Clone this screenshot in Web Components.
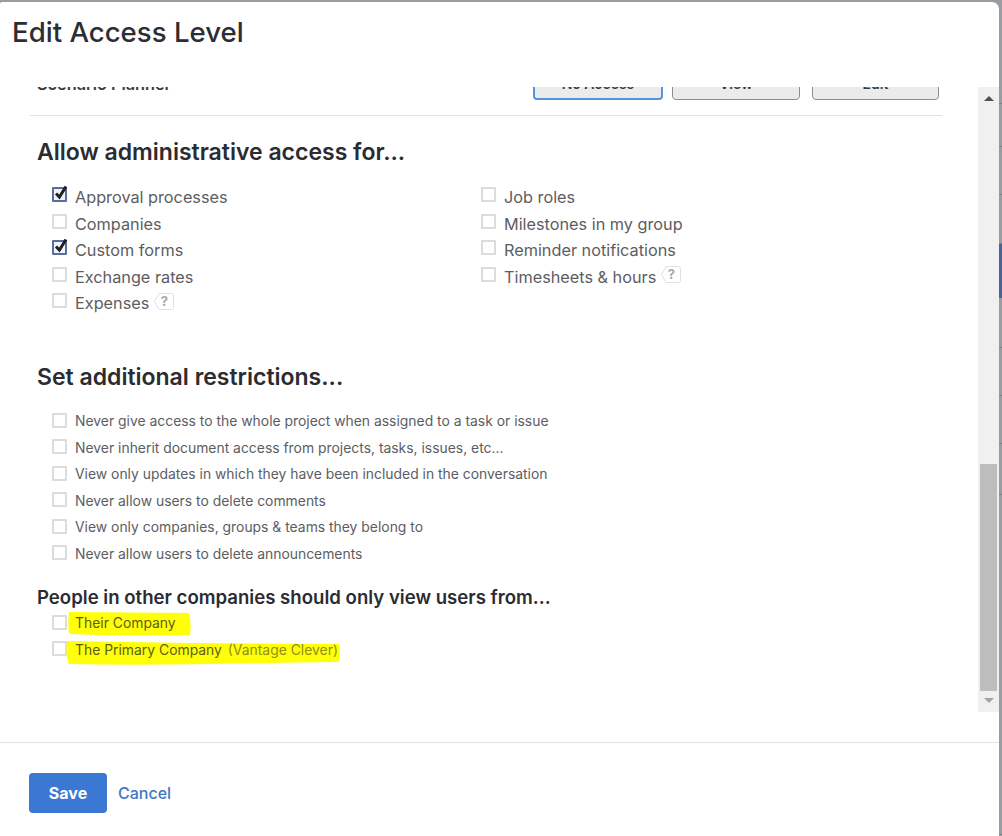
<!DOCTYPE html>
<html lang="en">
<head>
<meta charset="utf-8">
<title>Edit Access Level</title>
<style>
    html, body { margin: 0; height: 100%; }
    body { font-family: Inter, Lato, sans-serif; overflow: hidden; background: #9a9ca3; }
</style>
</head>
<body>
<access-page>
    <access-dialog heading="Edit Access Level">
        <level-row label="Scenario Planner"></level-row>

        <section-title>Allow administrative access for...</section-title>
        <check-columns>
            <div>
                <access-check checked>Approval processes</access-check>
                <access-check>Companies</access-check>
                <access-check checked>Custom forms</access-check>
                <access-check>Exchange rates</access-check>
                <access-check help>Expenses</access-check>
            </div>
            <div>
                <access-check>Job roles</access-check>
                <access-check>Milestones in my group</access-check>
                <access-check>Reminder notifications</access-check>
                <access-check help>Timesheets &amp; hours</access-check>
            </div>
        </check-columns>

        <section-title gap="45" below="16.5">Set additional restrictions...</section-title>
        <access-check small>Never give access to the whole project when assigned to a task or issue</access-check>
        <access-check small>Never inherit document access from projects, tasks, issues, etc...</access-check>
        <access-check small>View only updates in which they have been included in the conversation</access-check>
        <access-check small>Never allow users to delete comments</access-check>
        <access-check small>View only companies, groups &amp; teams they belong to</access-check>
        <access-check small>Never allow users to delete announcements</access-check>

        <section-title minor gap="17.5">People in other companies should only view users from...</section-title>
        <access-check small><marker-ink shape="short">Their Company</marker-ink></access-check>
        <access-check small><marker-ink shape="long">The Primary Company <small style="font-size:inherit;color:#8f8f12;margin-left:2px">(Vantage Clever)</small></marker-ink></access-check>
    </access-dialog>
</access-page>

<script>
class AccessPage extends HTMLElement {
    constructor() {
        super();
        this.attachShadow({ mode: 'open' });
    }

    connectedCallback() {
        // the sliver of the app behind the modal, on the right edge
        const bands = [102, 43, 48, 49, 54, 50, 48, 48, 51, 340];
        const strip = bands.map((h, i) => `<i class="${i === 4 ? 'active' : ''}" style="height:${h}px"></i>`).join('');
        this.shadowRoot.innerHTML = /*html*/`
        <style>
            :host{ display:flex; width:1002px; height:836px; padding-top:2px; box-sizing:border-box; background:#9a9ca3; }
            .main{ flex:1; min-width:0; }
            .strip{ width:3px; display:flex; flex-direction:column; }
            .strip i{ display:block; box-sizing:border-box; border-bottom:1px solid #7f8187; }
            .strip i.active{ background:#46639a; border-bottom:none; }
        </style>
        <div class="main"><slot></slot></div>
        <div class="strip">${strip}</div>`;
    }
}
customElements.define('access-page', AccessPage);

class AccessDialog extends HTMLElement {
    constructor() {
        super();
        this.attachShadow({ mode: 'open' });
    }

    static get styles() {
        return /*css*/`
        :host{
            display:flex;
            flex-direction:column;
            height:834px;
            background:#fff;
            border-radius:2px 7px 0 0;
            overflow:hidden;
            color:#55565b;
        }
        .head{
            height:85px;
            box-sizing:border-box;
            padding:13px 0 0 12px;
            flex:none;
        }
        h1{
            margin:0;
            font-size:27.6px;
            line-height:34px;
            font-weight:500;
            color:#2c2d35;
        }
        .body{
            height:625px;
            flex:none;
            display:flex;
        }
        .pane{
            flex:1;
            min-width:0;
            overflow:hidden;
            padding:0 36px 0 30px;
        }
        .foot{
            margin-top:30px;
            border-top:1px solid #e2e2e2;
            padding:30px 0 0 29px;
            display:flex;
            align-items:center;
            gap:11px;
        }
        .save{
            width:78px;
            height:40px;
            border:none;
            border-radius:4px;
            background:#3a78d4;
            color:#fff;
            font:700 16px Inter, sans-serif;
        }
        .cancel{
            color:#3f77c6;
            font-size:16px;
            font-weight:500;
            text-decoration:none;
        }
        `;
    }

    connectedCallback() {
        this.render();
    }

    render() {
        this.shadowRoot.innerHTML = /*html*/`
        <style>${AccessDialog.styles}</style>
        <header class="head"><h1>${this.getAttribute('heading')}</h1></header>
        <div class="body">
            <div class="pane"><slot></slot></div>
            <fake-scrollbar></fake-scrollbar>
        </div>
        <footer class="foot">
            <button class="save">Save</button>
            <a class="cancel" href="#">Cancel</a>
        </footer>`;
    }
}
customElements.define('access-dialog', AccessDialog);

class FakeScrollbar extends HTMLElement {
    constructor() {
        super();
        this.attachShadow({ mode: 'open' });
        this.shadowRoot.innerHTML = /*html*/`
        <style>
            :host{
                display:flex;
                flex-direction:column;
                align-items:center;
                flex:none;
                width:21px;
                box-sizing:border-box;
                padding:9px 0;
                background:#f0f0f0;
            }
            .up,.down{
                width:0;
                height:0;
                border-left:5px solid transparent;
                border-right:5px solid transparent;
            }
            .up{ border-bottom:5px solid #505050; }
            .down{ border-top:5px solid #a3a3a3; margin-top:7px; }
            .thumb{
                width:17px;
                height:227px;
                margin-top:auto;
                background:#bdbdbd;
            }
        </style>
        <div class="up"></div>
        <div class="thumb"></div>
        <div class="down"></div>`;
    }
}
customElements.define('fake-scrollbar', FakeScrollbar);

// the row scrolled mostly out of view, only its bottom edge shows
class LevelRow extends HTMLElement {
    constructor() {
        super();
        this.attachShadow({ mode: 'open' });
    }

    connectedCallback() {
        this.shadowRoot.innerHTML = /*html*/`
        <style>
            :host{
                display:flow-root;
                height:29px;
                box-sizing:border-box;
                border-bottom:1px solid #e2e2e2;
            }
            .row{
                height:30px;
                margin-top:-17px;
                display:flex;
                align-items:center;
            }
            .label{
                margin-left:7px;
                margin-top:-2px;
                width:496px;
                font-size:16.3px;
                font-weight:600;
                color:#3a3a3e;
                white-space:nowrap;
            }
            button{
                height:30px;
                box-sizing:border-box;
                border:1px solid #8c8c8c;
                border-radius:4px;
                background:#ebebeb;
                color:#3a3a3e;
                font:600 14px Inter, sans-serif;
                padding:0 0 3px;
                margin-left:9px;
                width:128px;
            }
            button.on{ width:130px; margin-left:0; border:2px solid #5495e0; }
            button:last-child{ margin-left:12px; width:127px; }
        </style>
        <div class="row">
            <span class="label">${this.getAttribute('label')}</span>
            <button class="on">No Access</button>
            <button>View</button>
            <button>Edit</button>
        </div>`;
    }
}
customElements.define('level-row', LevelRow);

class SectionTitle extends HTMLElement {
    constructor() {
        super();
        this.attachShadow({ mode: 'open' });
    }

    connectedCallback() {
        const minor = this.hasAttribute('minor');
        const top = this.getAttribute('gap') || 21;
        const below = this.getAttribute('below') || (minor ? 1.5 : 17);
        this.shadowRoot.innerHTML = /*html*/`
        <style>
            :host{
                display:block;
                margin:${top}px 0 ${below}px 7px;
                font-size:${minor ? 18.6 : 23}px;
                line-height:${minor ? 24 : 30}px;
                font-weight:600;
                color:#2b2c31;
                white-space:nowrap;
            }
        </style>
        <slot></slot>`;
    }
}
customElements.define('section-title', SectionTitle);

class CheckColumns extends HTMLElement {
    constructor() {
        super();
        this.attachShadow({ mode: 'open' });
        this.shadowRoot.innerHTML = /*html*/`
        <style>
            :host{ display:grid; grid-template-columns:429px 1fr; }
        </style>
        <slot></slot>`;
    }
}
customElements.define('check-columns', CheckColumns);

class AccessCheck extends HTMLElement {
    constructor() {
        super();
        this.attachShadow({ mode: 'open' });
    }

    static get styles() {
        return /*css*/`
        :host{
            display:flex;
            align-items:center;
            height:26.5px;
            padding-left:22px;
            font-size:16.25px;
            color:#5c5d62;
            white-space:nowrap;
        }
        :host([small]){
            font-size:13.9px;
        }
        .box{
            position:relative;
            flex:none;
            width:15px;
            height:15px;
            box-sizing:border-box;
            margin:-5px 8px 0 0;
            border:2px solid #dcdcdc;
            border-radius:1px;
            background:#fff;
        }
        :host([small]) .box{
            margin-top:-2px;
        }
        :host([checked]) .box{
            border-color:#5a6d9e;
            background:#f2f3f7;
        }
        svg{
            position:absolute;
            left:0;
            top:-5px;
        }
        `;
    }

    connectedCallback() {
        const tick = this.hasAttribute('checked')
            ? '<svg width="14" height="16" viewBox="0 0 14 16"><path d="M2 9.5 5.4 13 12 2.5" fill="none" stroke="#1f2126" stroke-width="3"/></svg>'
            : '';
        const help = this.hasAttribute('help') ? '<help-tag></help-tag>' : '';
        this.shadowRoot.innerHTML = /*html*/`
        <style>${AccessCheck.styles}</style>
        <span class="box">${tick}</span>
        <span><slot></slot></span>${help}`;
    }
}
customElements.define('access-check', AccessCheck);

class HelpTag extends HTMLElement {
    constructor() {
        super();
        this.attachShadow({ mode: 'open' });
        this.shadowRoot.innerHTML = /*html*/`
        <style>
            :host{
                position:relative;
                display:inline-block;
                width:20px;
                height:17px;
                margin:-4px 0 0 5px;
                font:700 13px/17px Inter, sans-serif;
                text-align:center;
                color:#a8a8a8;
            }
            svg{ position:absolute; left:0; top:0; }
            span{ position:relative; }
        </style>
        <svg width="20" height="17" viewBox="0 0 20 17"><path d="M5 .5h12.5a2 2 0 0 1 2 2v12a2 2 0 0 1-2 2H5l-4.5-8z" fill="#fff" stroke="#e0e0e0"/></svg>
        <span>?</span>`;
    }
}
customElements.define('help-tag', HelpTag);

// yellow marker stroke someone drew over the screenshot
class MarkerInk extends HTMLElement {
    constructor() {
        super();
        this.attachShadow({ mode: 'open' });
    }

    connectedCallback() {
        const long = this.getAttribute('shape') === 'long';
        const svg = long
            ? '<svg style="left:-9px;top:0" width="274" height="25" viewBox="0 0 274 25"><path d="M1 0L120 2L273 3C274 10 274 17 273 21C180 22 90 25 3 23C0 17 0 7 1 0Z" fill="#ffff0a"/></svg>'
            : '<svg style="left:-7px;top:-2px" width="123" height="24" viewBox="0 0 123 24"><path d="M1 0L121 1C123 9 123 17 122 23C85 23 40 24 1 22C0 15 0 6 1 0Z" fill="#ffff0a"/></svg>';
        this.shadowRoot.innerHTML = /*html*/`
        <style>
            :host{ position:relative; display:inline-block; line-height:18px; color:#5e5e12; isolation:isolate; }
            svg{ position:absolute; z-index:-1; }
        </style>
        ${svg}<slot></slot>`;
    }
}
customElements.define('marker-ink', MarkerInk);
</script>
</body>
</html>
